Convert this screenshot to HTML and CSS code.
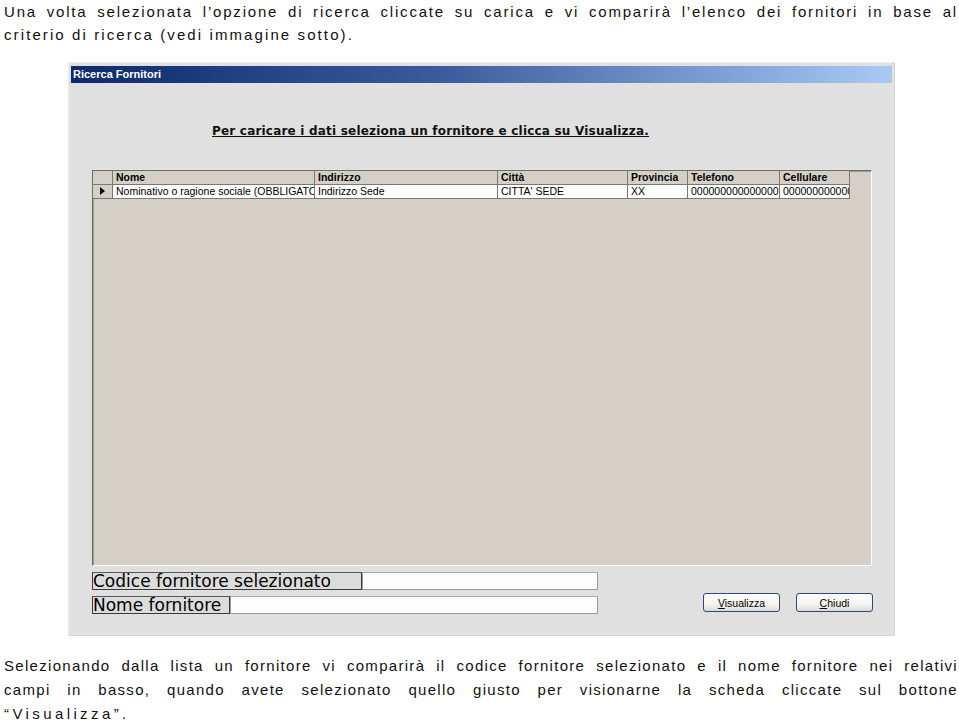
FILE: index.html
```html
<!DOCTYPE html>
<html lang="it">
<head>
<meta charset="utf-8">
<title>Ricerca Fornitori</title>
<link rel="stylesheet" href="styles.css">
</head>
<body>
<p class="text intro">
  <span class="line">Una volta selezionata l’opzione di ricerca cliccate su carica e vi comparirà l’elenco dei fornitori in base al</span>
  <span class="line last">criterio di ricerca (vedi immagine sotto).</span>
</p>

<div class="window">
  <div class="titlebar">Ricerca Fornitori</div>
  <div class="content">
    <div class="heading">Per caricare i dati seleziona un fornitore e clicca su Visualizza.</div>
    <div class="grid">
      <div class="row header">
        <div class="cell ind"></div>
        <div class="cell c-nome">Nome</div>
        <div class="cell c-ind">Indirizzo</div>
        <div class="cell c-citta">Città</div>
        <div class="cell c-prov">Provincia</div>
        <div class="cell c-tel">Telefono</div>
        <div class="cell c-cell">Cellulare</div>
      </div>
      <div class="row data">
        <div class="cell ind"><span class="arrow"></span></div>
        <div class="cell c-nome">Nominativo o ragione sociale (OBBLIGATORIO)</div>
        <div class="cell c-ind">Indirizzo Sede</div>
        <div class="cell c-citta">CITTA' SEDE</div>
        <div class="cell c-prov">XX</div>
        <div class="cell c-tel">000000000000000</div>
        <div class="cell c-cell">000000000000000</div>
      </div>
    </div>
    <div class="bottom">
      <div class="fields">
        <div class="field">
          <span class="label l1">Codice fornitore selezionato</span>
          <span class="input i1"></span>
        </div>
        <div class="field">
          <span class="label l2">Nome fornitore</span>
          <span class="input i2"></span>
        </div>
      </div>
      <div class="buttons">
        <button class="btn"><u>V</u>isualizza</button>
        <button class="btn"><u>C</u>hiudi</button>
      </div>
    </div>
  </div>
</div>

<p class="text outro">
  <span class="line">Selezionando dalla lista un fornitore vi comparirà il codice fornitore selezionato e il nome fornitore nei relativi</span>
  <span class="line">campi in basso, quando avete selezionato quello giusto per visionarne la scheda cliccate sul bottone</span>
  <span class="line last wide">“Visualizza”.</span>
</p>
</body>
</html>
```

FILE: styles.css
```css
html, body {
  margin: 0;
  padding: 0;
  background: #ffffff;
}

body {
  font-family: "Liberation Sans", Arial, sans-serif;
  font-size: 15px;
  color: #111;
}

.text {
  margin: 0;
  padding: 0 1px 0 4px;
}

.line {
  display: block;
  white-space: nowrap;
  text-align: justify;
  text-align-last: justify;
}

.line.last {
  text-align-last: left;
}

.intro {
  line-height: 23px;
  letter-spacing: 1.8px;
}

.intro .last {
  letter-spacing: 2.1px;
}

.outro {
  padding-top: 18px;
  line-height: 24px;
  letter-spacing: 1.3px;
}

.outro .wide {
  letter-spacing: 3.4px;
}

.window {
  margin: 16px 0 0 68px;
  width: 827px;
  height: 574px;
  box-sizing: border-box;
  background: #e1e1e1;
  border: 1px solid #ececec;
  border-right-color: #d6d6d6;
  border-bottom-color: #d6d6d6;
  padding: 3px 2px 2px 2px;
  display: flex;
  flex-direction: column;
}

.titlebar {
  height: 17px;
  line-height: 16px;
  background: linear-gradient(to right, #0c2a6c 0%, #3a5c9c 45%, #7ea2d8 80%, #a8caf2 100%);
  color: #fff;
  font-family: "Liberation Sans", Arial, sans-serif;
  font-weight: bold;
  font-size: 11px;
  padding-left: 2px;
}

.content {
  flex: 1;
  display: flex;
  flex-direction: column;
  padding: 0 0 0 21px;
  background: #e0e0e0;
}

.heading {
  margin: 41px 0 0 120px;
  font-family: "DejaVu Sans", Verdana, sans-serif;
  font-weight: bold;
  font-size: 12px;
  letter-spacing: 0.2px;
  text-decoration: underline;
  color: #111;
  height: 46px;
  line-height: 14px;
}

.grid {
  width: 780px;
  height: 396px;
  box-sizing: border-box;
  background: #d4d0c8;
  border: 1px solid #6e6c66;
  border-right-color: #fdfdfd;
  border-bottom-color: #fdfdfd;
  box-shadow: inset 1px 1px 0 #9a9890;
  font-family: "Liberation Sans", Arial, sans-serif;
  font-size: 10.5px;
  color: #000;
}

.row {
  display: flex;
  height: 14px;
}

.cell {
  box-sizing: border-box;
  height: 14px;
  line-height: 13px;
  padding-left: 3px;
  white-space: nowrap;
  overflow: hidden;
  border-right: 1px solid #7a7870;
  border-bottom: 1px solid #7a7870;
}

.header .cell {
  font-weight: bold;
  background: #d4d0c8;
}

.data .cell {
  background: #ffffff;
}

.data .cell.ind {
  background: #d4d0c8;
}

.ind { width: 20px; position: relative; }
.c-nome { width: 202px; }
.c-ind { width: 183px; }
.c-citta { width: 130px; }
.c-prov { width: 60px; }
.c-tel { width: 92px; }
.c-cell { width: 70px; }

.arrow {
  position: absolute;
  left: 7px;
  top: 2px;
  width: 0;
  height: 0;
  border-top: 4.5px solid transparent;
  border-bottom: 4.5px solid transparent;
  border-left: 5px solid #000;
}

.bottom {
  display: flex;
  align-items: flex-start;
  margin-top: 6px;
}

.fields {
  display: flex;
  flex-direction: column;
  gap: 6px;
}

.field {
  display: flex;
  height: 18px;
}

.label {
  box-sizing: border-box;
  height: 18px;
  font-family: "DejaVu Sans", Verdana, sans-serif;
  font-size: 17px;
  line-height: 16px;
  color: #000;
  background: #dcdcdc;
  border: 1px solid #3a3a3a;
  border-top-color: #555;
  padding-left: 0;
  white-space: nowrap;
  overflow: hidden;
}

.l1 { width: 270px; }
.l2 { width: 138px; }

.input {
  box-sizing: border-box;
  height: 18px;
  background: #fdfdfe;
  border: 1px solid #9a9a9a;
  border-top-color: #a8a8a8;
}

.i1 { width: 236px; }
.i2 { width: 368px; }

.buttons {
  display: flex;
  gap: 16px;
  margin: 21px 0 0 105px;
}

.btn {
  width: 77px;
  height: 19px;
  padding: 0;
  box-sizing: border-box;
  border: 1px solid #2b4a7a;
  border-radius: 3px;
  background: linear-gradient(to bottom, #ffffff 0%, #f4f3ee 60%, #dcdad2 100%);
  font-family: "Liberation Sans", Arial, sans-serif;
  font-size: 10.5px;
  color: #000;
  line-height: 16px;
}
```
